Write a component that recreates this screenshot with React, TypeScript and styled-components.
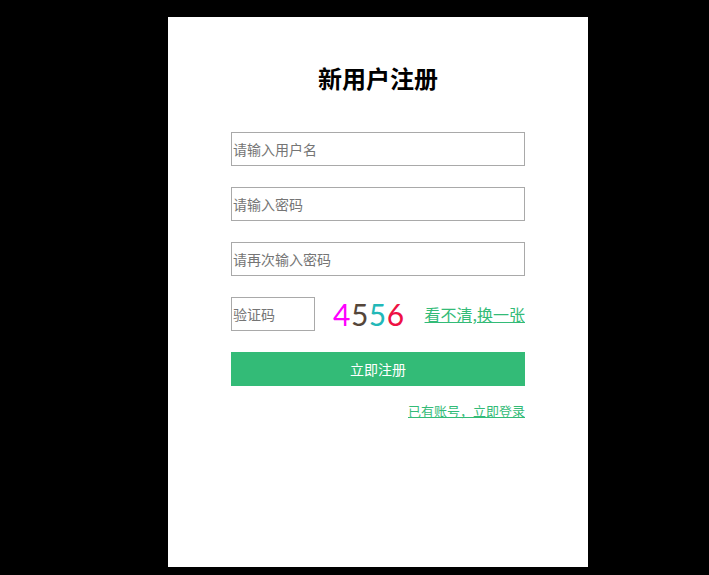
import styled, { createGlobalStyle } from 'styled-components'

const GlobalStyle = createGlobalStyle`
  html, body {
    margin: 0;
    padding: 0;
    background: #000;
  }
  body {
    font-family: 'Noto Sans CJK SC', 'Noto Sans', sans-serif;
  }
`

const Page = styled.div`
  padding: 17px 0 0 168px;
  min-height: 575px;
  box-sizing: border-box;
`

const Card = styled.div`
  width: 420px;
  height: 550px;
  background: #fff;
  box-sizing: border-box;
  padding-top: 49px;
  display: flex;
  flex-direction: column;
  align-items: center;
`

const Title = styled.h1`
  margin: 0;
  font-size: 24px;
  line-height: 24px;
  font-weight: bold;
  color: #000;
`

const Form = styled.form`
  width: 294px;
  margin-top: 42px;
  display: flex;
  flex-direction: column;
  gap: 21px;
`

const Input = styled.input<{ $width?: number }>`
  width: ${(p) => (p.$width ? `${p.$width}px` : '100%')};
  height: 34px;
  box-sizing: border-box;
  border: 1px solid #a9a9a9;
  padding: 0 1px;
  font-family: 'Noto Sans CJK SC', sans-serif;
  font-size: 14px;
  color: #333;
  outline: none;

  &::placeholder {
    color: #757575;
  }
`

const CodeRow = styled.div`
  display: flex;
  align-items: center;
`

const Captcha = styled.div`
  margin-left: 18px;
  font-family: Lato, 'DejaVu Sans', sans-serif;
  font-weight: 400;
  font-size: 30px;
  line-height: 34px;
  letter-spacing: 0.5px;
`

const Digit = styled.span<{ $color: string }>`
  color: ${(p) => p.$color};
`

const Refresh = styled.a`
  margin-left: auto;
  font-size: 16px;
  line-height: 20px;
  color: #33bb77;
  text-decoration: underline;
  cursor: pointer;
`

const Submit = styled.button`
  width: 100%;
  height: 34px;
  border: none;
  background: #33bb77;
  color: #fff;
  font-family: 'Noto Sans CJK SC', sans-serif;
  font-size: 14px;
  cursor: pointer;
`

const Footer = styled.div`
  width: 294px;
  margin-top: 18px;
  text-align: right;
  font-size: 13px;
  line-height: 14px;
`

const LoginLink = styled.a`
  color: #33bb77;
  text-decoration: underline;
  cursor: pointer;
`

const digits: [string, string][] = [
  ['4', '#ff00ff'],
  ['5', '#55463a'],
  ['5', '#22b8b8'],
  ['6', '#ee1144'],
]

export default function App() {
  return (
    <>
      <GlobalStyle />
      <Page>
        <Card>
          <Title>新用户注册</Title>
          <Form onSubmit={(e) => e.preventDefault()}>
            <Input placeholder='请输入用户名' />
            <Input type='password' placeholder='请输入密码' />
            <Input type='password' placeholder='请再次输入密码' />
            <CodeRow>
              <Input $width={84} placeholder='验证码' />
              <Captcha>
                {digits.map(([d, c], i) => (
                  <Digit key={i} $color={c}>{d}</Digit>
                ))}
              </Captcha>
              <Refresh>看不清,换一张</Refresh>
            </CodeRow>
            <Submit type='submit'>立即注册</Submit>
          </Form>
          <Footer>
            <LoginLink>已有账号，立即登录</LoginLink>
          </Footer>
        </Card>
      </Page>
    </>
  )
}
